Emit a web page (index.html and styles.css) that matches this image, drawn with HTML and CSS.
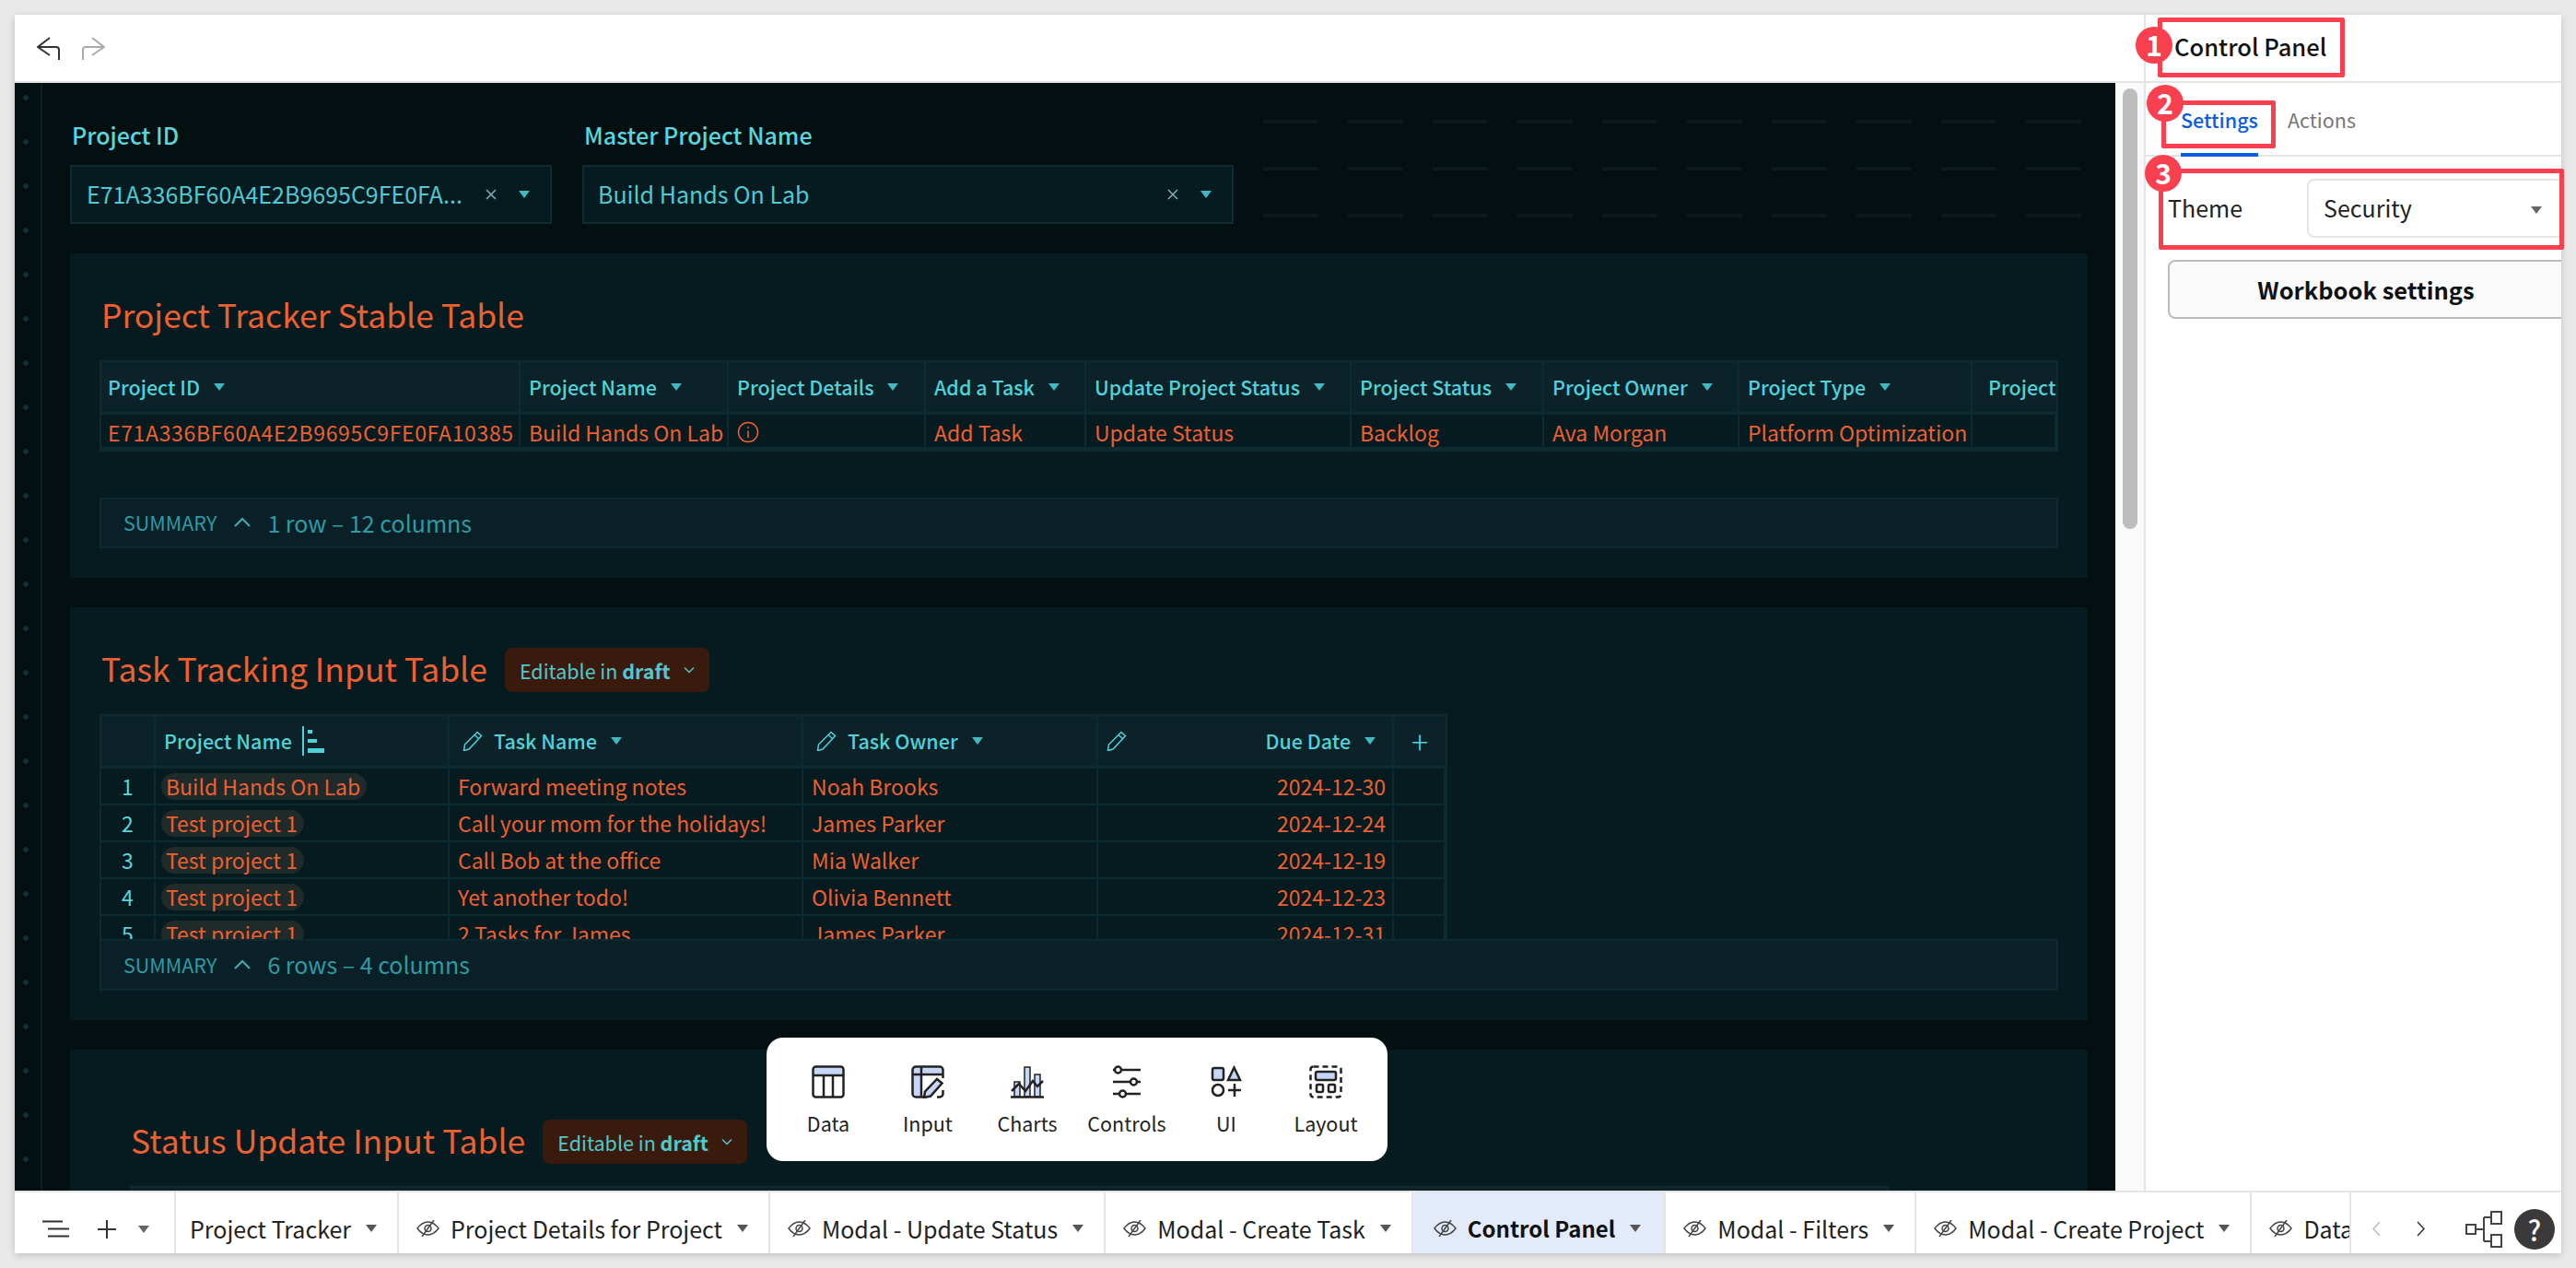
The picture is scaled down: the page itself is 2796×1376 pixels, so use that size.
FILE: index.html
```html
<!DOCTYPE html>
<html lang="en">
<head>
    <meta charset="UTF-8">
    <title>Control Panel</title>
    <link rel="stylesheet" href="styles.css">
</head>
<body>
<div class="app">
    <div class="topbar">
        <div class="history">
            <svg class="hist-icon" viewBox="0 0 26 26"><path d="M14 2 1 12l13 9M1 12h20a3 3 0 0 1 3 3v11"/></svg>
            <svg class="hist-icon redo" viewBox="0 0 26 26"><path d="M12 2l13 10-13 9M25 12H5a3 3 0 0 0-3 3v11"/></svg>
        </div>
        <div class="side-title"><span>Control Panel</span></div>
    </div>

    <div class="main">
        <div class="canvas">
            <div class="strip"></div>
            <div class="sheet">
                <div class="controls">
                    <div class="control first">
                        <label>Project ID</label>
                        <div class="input"><span class="input-text">E71A336BF60A4E2B9695C9FE0FA...</span><svg class="clear" viewBox="0 0 12 12"><path d="M1 1l10 10M11 1 1 11"/></svg><i class="caret"></i></div>
                    </div>
                    <div class="control second">
                        <label>Master Project Name</label>
                        <div class="input"><span class="input-text">Build Hands On Lab</span><svg class="clear" viewBox="0 0 12 12"><path d="M1 1l10 10M11 1 1 11"/></svg><i class="caret"></i></div>
                    </div>
                    <div class="dashes"><div></div><div></div><div></div></div>
                </div>

                <div class="panel">
                    <h2 class="panel-title">Project Tracker Stable Table</h2>
                    <div class="table t1">
                        <div class="th">Project ID <i class="caret"></i></div>
                        <div class="th">Project Name <i class="caret"></i></div>
                        <div class="th">Project Details <i class="caret"></i></div>
                        <div class="th">Add a Task <i class="caret"></i></div>
                        <div class="th">Update Project Status <i class="caret"></i></div>
                        <div class="th">Project Status <i class="caret"></i></div>
                        <div class="th">Project Owner <i class="caret"></i></div>
                        <div class="th">Project Type <i class="caret"></i></div>
                        <div class="th last">Project</div>
                        <div class="td hash">E71A336BF60A4E2B9695C9FE0FA10385</div>
                        <div class="td">Build Hands On Lab</div>
                        <div class="td"><svg class="info" viewBox="0 0 24 24"><circle cx="12" cy="12" r="10.500"/><path d="M12 10.500V18M12 6v2"/></svg></div>
                        <div class="td">Add Task</div>
                        <div class="td">Update Status</div>
                        <div class="td">Backlog</div>
                        <div class="td">Ava Morgan</div>
                        <div class="td">Platform Optimization</div>
                        <div class="td"></div>
                    </div>
                    <div class="summary"><span class="sum-label">SUMMARY</span><svg class="sum-caret" viewBox="0 0 18 11"><path d="M1 10l8-8 8 8"/></svg><span>1 row – 12 columns</span></div>
                </div>

                <div class="panel p2">
                    <div class="title-row">
                        <h2 class="panel-title">Task Tracking Input Table</h2>
                        <div class="badge">Editable in <b>draft</b><svg viewBox="0 0 12 8"><path d="M1 1.500l5 5 5-5"/></svg></div>
                    </div>
                    <div class="table-clip">
                        <div class="table t2">
                            <div class="th"></div>
                            <div class="th">Project Name<svg class="sort" viewBox="0 0 24 32"><path class="sort-line" d="M1 0v32"/><path class="sort-bar" d="M6 4h5v4H6zM6 14h10v4H6zM6 24h18v5H6z"/></svg></div>
                            <div class="th"><svg class="pencil" viewBox="0 0 22 22"><path d="M16 1.500l4.500 4L7 20l-5.500 1.500L2.500 15zM13 4.500l4.500 4"/></svg>Task Name <i class="caret"></i></div>
                            <div class="th"><svg class="pencil" viewBox="0 0 22 22"><path d="M16 1.500l4.500 4L7 20l-5.500 1.500L2.500 15zM13 4.500l4.500 4"/></svg>Task Owner <i class="caret"></i></div>
                            <div class="th right"><svg class="pencil solo" viewBox="0 0 22 22"><path d="M16 1.500l4.500 4L7 20l-5.500 1.500L2.500 15zM13 4.500l4.500 4"/></svg>Due Date <i class="caret"></i></div>
                            <div class="th plus">+</div>

                            <div class="td num">1</div>
                            <div class="td name"><span class="pill">Build Hands On Lab</span></div>
                            <div class="td">Forward meeting notes</div>
                            <div class="td">Noah Brooks</div>
                            <div class="td date">2024-12-30</div>
                            <div class="td"></div>

                            <div class="td num">2</div>
                            <div class="td name"><span class="pill">Test project 1</span></div>
                            <div class="td">Call your mom for the holidays!</div>
                            <div class="td">James Parker</div>
                            <div class="td date">2024-12-24</div>
                            <div class="td"></div>

                            <div class="td num">3</div>
                            <div class="td name"><span class="pill">Test project 1</span></div>
                            <div class="td">Call Bob at the office</div>
                            <div class="td">Mia Walker</div>
                            <div class="td date">2024-12-19</div>
                            <div class="td"></div>

                            <div class="td num">4</div>
                            <div class="td name"><span class="pill">Test project 1</span></div>
                            <div class="td">Yet another todo!</div>
                            <div class="td">Olivia Bennett</div>
                            <div class="td date">2024-12-23</div>
                            <div class="td"></div>

                            <div class="td num">5</div>
                            <div class="td name"><span class="pill">Test project 1</span></div>
                            <div class="td">2 Tasks for James</div>
                            <div class="td">James Parker</div>
                            <div class="td date">2024-12-31</div>
                            <div class="td"></div>
                        </div>
                    </div>
                    <div class="summary tight"><span class="sum-label">SUMMARY</span><svg class="sum-caret" viewBox="0 0 18 11"><path d="M1 10l8-8 8 8"/></svg><span>6 rows – 4 columns</span></div>
                </div>

                <div class="panel p3">
                    <div class="title-row">
                        <h2 class="panel-title">Status Update Input Table</h2>
                        <div class="badge">Editable in <b>draft</b><svg viewBox="0 0 12 8"><path d="M1 1.500l5 5 5-5"/></svg></div>
                    </div>
                    <div class="table-top"></div>
                </div>
            </div>

            <div class="toolbar">
                <div class="tool">
                    <svg viewBox="0 0 36 36"><rect class="fill" x="2" y="2" width="32" height="9"/><rect x="1.500" y="1.500" width="33" height="33" rx="3"/><path d="M2 11h32M13 11v23M23 11v23"/></svg>
                    <span>Data</span>
                </div>
                <div class="tool">
                    <svg viewBox="0 0 36 36"><path class="fill" d="M2 2h32v8H11v24H2z"/><path d="M13 34.500H5A3.500 3.500 0 0 1 1.500 31V5A3.500 3.500 0 0 1 5 1.500h26A3.500 3.500 0 0 1 34.500 5v9M2 10h32M11 2v32M34.500 27v4a3.500 3.500 0 0 1-3.500 3.500h-3"/><path class="fill-line" d="M28 15l5.500 4.500L21 33.500l-7 1.500 1-6.500z"/></svg>
                    <span>Input</span>
                </div>
                <div class="tool">
                    <svg viewBox="0 0 36 36"><path class="fill-thin" d="M4 18h6v16H4zM15 2h6v32h-6zM26 10h6v24h-6z"/><path d="M0 34.500h36"/><path d="M1 28l8-8 7 8 8-11 5 6 6-6"/></svg>
                    <span>Charts</span>
                </div>
                <div class="tool">
                    <svg viewBox="0 0 36 36"><path d="M3 5h2M12 5h21M3 18h19M29 18h4M3 31h7M17 31h16"/><circle cx="8.500" cy="5" r="3.500"/><circle cx="25.500" cy="18" r="3.500"/><circle cx="13.500" cy="31" r="3.500"/></svg>
                    <span>Controls</span>
                </div>
                <div class="tool">
                    <svg viewBox="0 0 36 36"><rect class="fill-line" x="3" y="3" width="12" height="13" rx="2"/><path class="fill-line" d="M26.500 2.500 33 16H20z"/><circle cx="9" cy="27" r="6"/><path d="M20 27h14M27 20v14"/></svg>
                    <span>UI</span>
                </div>
                <div class="tool">
                    <svg viewBox="0 0 36 36"><rect class="dash" x="1.500" y="1.500" width="33" height="33" rx="3"/><rect class="fill-line" x="7" y="7" width="22" height="9" rx="2"/><rect x="8" y="21" width="7" height="8" rx="1.500"/><rect x="21" y="21" width="7" height="8" rx="1.500"/></svg>
                    <span>Layout</span>
                </div>
            </div>
        </div>

        <div class="gutter"><div class="thumb"></div></div>

        <div class="side">
            <div class="tabs-row">
                <div class="side-tab active">Settings</div>
                <div class="side-tab">Actions</div>
            </div>
            <div class="theme-row">
                <span class="theme-label">Theme</span>
                <div class="select">Security<i class="caret grey"></i></div>
            </div>
            <div class="wb-button">Workbook settings</div>
        </div>
    </div>

    <div class="bottombar">
        <div class="page-tools">
            <svg class="menu" viewBox="0 0 29 19"><path d="M0 1.500h22M6 9.500h23M6 17.500h23"/></svg>
            <svg class="add" viewBox="0 0 20 20"><path d="M10 0v20M0 10h20"/></svg>
            <i class="caret grey"></i>
        </div>
        <div class="pages">
            <div class="page plain">Project Tracker<i class="caret dark"></i></div>
            <div class="page"><svg class="eye" viewBox="0 0 25 18"><path d="M1 9c3-4 7-7 11.500-7S21 5 24 9c-3 4-7 7-11.500 7S4 13 1 9zM19 0 6 18"/><circle cx="12.500" cy="9" r="3.500"/></svg>Project Details for Project<i class="caret dark"></i></div>
            <div class="page"><svg class="eye" viewBox="0 0 25 18"><path d="M1 9c3-4 7-7 11.500-7S21 5 24 9c-3 4-7 7-11.500 7S4 13 1 9zM19 0 6 18"/><circle cx="12.500" cy="9" r="3.500"/></svg>Modal - Update Status<i class="caret dark"></i></div>
            <div class="page"><svg class="eye" viewBox="0 0 25 18"><path d="M1 9c3-4 7-7 11.500-7S21 5 24 9c-3 4-7 7-11.500 7S4 13 1 9zM19 0 6 18"/><circle cx="12.500" cy="9" r="3.500"/></svg>Modal - Create Task<i class="caret dark"></i></div>
            <div class="page current"><svg class="eye" viewBox="0 0 25 18"><path d="M1 9c3-4 7-7 11.500-7S21 5 24 9c-3 4-7 7-11.500 7S4 13 1 9zM19 0 6 18"/><circle cx="12.500" cy="9" r="3.500"/></svg>Control Panel<i class="caret dark"></i></div>
            <div class="page"><svg class="eye" viewBox="0 0 25 18"><path d="M1 9c3-4 7-7 11.500-7S21 5 24 9c-3 4-7 7-11.500 7S4 13 1 9zM19 0 6 18"/><circle cx="12.500" cy="9" r="3.500"/></svg>Modal - Filters<i class="caret dark"></i></div>
            <div class="page"><svg class="eye" viewBox="0 0 25 18"><path d="M1 9c3-4 7-7 11.500-7S21 5 24 9c-3 4-7 7-11.500 7S4 13 1 9zM19 0 6 18"/><circle cx="12.500" cy="9" r="3.500"/></svg>Modal - Create Project<i class="caret dark"></i></div>
            <div class="page"><svg class="eye" viewBox="0 0 25 18"><path d="M1 9c3-4 7-7 11.500-7S21 5 24 9c-3 4-7 7-11.500 7S4 13 1 9zM19 0 6 18"/><circle cx="12.500" cy="9" r="3.500"/></svg>Data</div>
        </div>
        <div class="nav-tools">
            <svg class="chev off" viewBox="0 0 10 17"><path d="M9 1 2 8.500 9 16"/></svg>
            <svg class="chev" viewBox="0 0 10 17"><path d="M1 1l7 7.500L1 16"/></svg>
            <svg class="tree" viewBox="0 0 40 40"><path d="M11 20h9M20 7v26M20 7h8M20 33h8"/><rect x="1" y="15" width="10" height="10"/><rect x="28" y="1" width="11" height="13"/><rect x="28" y="26" width="11" height="13"/></svg>
            <div class="help">?</div>
        </div>
    </div>
</div>

<div class="note n1"></div>
<div class="note n2"></div>
<div class="note n3"></div>
<div class="dot d1">1</div>
<div class="dot d2">2</div>
<div class="dot d3">3</div>
</body>
</html>
```
FILE: styles.css
```css
* {
    margin: 0;
    padding: 0;
    box-sizing: border-box;
    font-family: "Noto Sans CJK SC", "Noto Sans", sans-serif;
}

body {
    width: 2796px;
    height: 1376px;
    overflow: hidden;
    background-color: #e9e9e9;
    padding: 16px;
    position: relative;
}

.app {
    width: 2764px;
    height: 1344px;
    background-color: white;
    display: flex;
    flex-direction: column;
    box-shadow: 0 2px 8px rgba(0, 0, 0, .18);
}

.caret {
    display: inline-block;
    width: 0;
    height: 0;
    border-left: 6.500px solid transparent;
    border-right: 6.500px solid transparent;
    border-top: 8px solid #3fb9c2;
}

.caret.grey { border-top-color: #666; }
.caret.dark { border-top-color: #555; margin-left: 16px; }

/* top bar */
.topbar {
    height: 74px;
    flex: none;
    display: flex;
    border-bottom: 2px solid #e4e4e4;
}

.history {
    flex: 1;
    display: flex;
    align-items: center;
    gap: 22px;
    padding-left: 24px;
}

.hist-icon {
    width: 26px;
    height: 26px;
    fill: none;
    stroke: #333;
    stroke-width: 2;
}

.hist-icon.redo { stroke: #aaa; }

.side-title {
    width: 453px;
    border-left: 2px solid #e4e4e4;
    padding: 0 0 5px 31px;
    display: flex;
    align-items: center;
    font-size: 25.500px;
    font-weight: 500;
    color: #111;
}

/* main area */
.main {
    flex: 1;
    display: flex;
    min-height: 0;
}

.canvas {
    width: 2280px;
    flex: none;
    background-color: #040f11;
    display: flex;
    overflow: hidden;
    position: relative;
}

.strip {
    width: 30px;
    flex: none;
    border-right: 2px solid #0a2025;
    background-image: radial-gradient(circle at 12px 16px, #103038 2.500px, transparent 3px);
    background-size: 30px 48px;
}

.sheet {
    width: 2190px;
    margin-left: 30px;
    flex: none;
}

.controls {
    display: flex;
    padding-top: 41px;
    height: 185px;
}

.control label {
    display: block;
    height: 30px;
    line-height: 30px;
    font-size: 25px;
    font-weight: 500;
    color: #5ad6de;
    padding-left: 2px;
}

.control.first { width: 523px; }
.control.second { width: 707px; margin-left: 33px; }
.control.second .input { padding-left: 15px; }

.input {
    margin-top: 18px;
    height: 64px;
    background-color: #061b20;
    border: 2px solid #0f2b31;
    display: flex;
    align-items: center;
    padding: 0 22px 0 16px;
    color: #4fc9d2;
    font-size: 25px;
    line-height: 30px;
}

.input-text {
    flex: 1;
    white-space: nowrap;
    padding-bottom: 2px;
}

.clear {
    width: 12px;
    height: 12px;
    margin-right: 24px;
    fill: none;
    stroke: #7ab4ba;
    stroke-width: 1.500;
}

.dashes {
    flex: 1;
    margin-left: 32px;
    margin-top: -1px;
}

.dashes div {
    height: 4px;
    margin-bottom: 47px;
    background-image: repeating-linear-gradient(90deg, #0a1a1d 0 60px, transparent 60px 92px);
}

/* panels */
.panel {
    background-color: #051b20;
    padding: 38px 32px 32px;
    margin-bottom: 32px;
    height: 352px;
    flex: none;
}

.panel-title {
    font-size: 35.500px;
    line-height: 56px;
    height: 60px;
    font-weight: 400;
    color: #ee6030;
    padding-left: 2px;
}

.panel.p2 {
    height: 448px;
    padding-top: 44px;
}

.panel.p3 {
    height: 300px;
    padding-top: 76px;
}

.title-row {
    display: flex;
    align-items: center;
    height: 48px;
}

.title-row .panel-title {
    padding-left: 2px;
    margin-right: 19px;
}

.badge {
    height: 48px;
    background-color: #3a1a0c;
    border-radius: 8px;
    padding: 0 16px;
    display: flex;
    align-items: center;
    color: #50c8cf;
    font-size: 21.500px;
    white-space: pre;
}

.badge b { font-weight: 700; }

.badge svg {
    width: 12px;
    height: 8px;
    margin-left: 14px;
    fill: none;
    stroke: #50c8cf;
    stroke-width: 1.500;
}

.p3 .title-row { padding-left: 32px; }

.table {
    display: grid;
    border: 2px solid #0d2a30;
    border-bottom-width: 3px;
    margin-top: 18px;
    overflow: hidden;
}

.t1 {
    grid-template-columns: 455px 226px 214px 174px 288px 209px 212px 253px 91px;
    grid-template-rows: 57px 37px;
}

.th {
    background-color: #0a2228;
    color: #4fd2da;
    font-size: 21.500px;
    font-weight: 500;
    line-height: 30px;
    padding-left: 9px;
    display: flex;
    align-items: center;
    white-space: pre;
    border-right: 2px solid #0d2a30;
    border-bottom: 3px solid #0d2a30;
    overflow: hidden;
}

.th:first-child { padding-left: 7px; }
.th .caret { margin-left: 10px; }
.th.last { border-right: none; padding-left: 17px; }

.td {
    color: #ee6030;
    font-size: 23px;
    line-height: 30px;
    padding-left: 9px;
    display: flex;
    align-items: center;
    white-space: nowrap;
    border-right: 2px solid #0d2a30;
    border-bottom: 2px solid #0d2a30;
    overflow: hidden;
}

.t1 .td { padding-top: 2px; }
.td.hash { letter-spacing: .65px; padding-left: 7px; }

.info {
    width: 24px;
    height: 24px;
    fill: none;
    stroke: #ee6030;
    stroke-width: 1.500;
}

.summary {
    margin-top: 50px;
    height: 55px;
    background-color: #0a2027;
    border: 2px solid #0d2a30;
    display: flex;
    align-items: center;
    padding: 0 0 2px 24px;
    color: #2f9aa3;
    font-size: 25px;
}

.summary.tight {
    margin-top: 0;
    height: 56px;
}

.sum-label { font-size: 21.500px; }

.sum-caret {
    width: 18px;
    height: 11px;
    margin: 0 18px 0 19px;
    fill: none;
    stroke: #4aa9b1;
    stroke-width: 2;
}

.table-clip {
    margin-top: 24px;
    height: 244px;
    overflow: hidden;
}

.t2 {
    margin-top: 0;
    width: 1463px;
    grid-template-columns: 59px 319px 384px 320px 321px 56px;
    grid-template-rows: 57px repeat(5, 40px);
}

.t2 .th { padding-left: 9px; }
.t2 .th:nth-child(3), .t2 .th:nth-child(4) { padding-left: 14px; }
.t2 .th .sort { margin-left: 11px; }

.t2 .th.right {
    justify-content: flex-end;
    padding-right: 18px;
}

.t2 .th.plus {
    font-size: 34px;
    font-weight: 300;
    justify-content: center;
    padding-left: 0;
    border-right: none;
}

.sort {
    width: 24px;
    height: 32px;
}

.sort-line { fill: none; stroke: #4fd2da; stroke-width: 2; }
.sort-bar { fill: #4fd2da; }

.pencil {
    width: 22px;
    height: 22px;
    margin-right: 12px;
    fill: none;
    stroke: #4fd2da;
    stroke-width: 1.500;
}

.pencil.solo { margin-right: auto; }

.td.num {
    color: #5ad6de;
    justify-content: center;
    padding-left: 0;
}

.td.name { padding-left: 6px; }

.pill {
    height: 29px;
    line-height: 28px;
    padding: 0 7px 0 5px;
    border-radius: 15px;
    background-color: #1f2a2a;
}

.td.date {
    justify-content: flex-end;
    padding-right: 7px;
}

.table-top {
    margin-top: 24px;
    margin-left: 33px;
    width: 1909px;
    height: 80px;
    background-color: #0a2228;
    border: 2px solid #0d2a30;
}

/* floating toolbar */
.toolbar {
    position: absolute;
    left: 816px;
    bottom: 32px;
    width: 674px;
    height: 134px;
    background-color: white;
    border-radius: 18px;
    display: grid;
    grid-template-columns: repeat(6, 108px);
    padding: 30px 13px 0;
}

.tool {
    display: flex;
    flex-direction: column;
    align-items: center;
}

.tool svg {
    height: 36px;
    width: 36px;
    fill: none;
    stroke: #222;
    stroke-width: 2.500;
}

.tool .fill { fill: #c6d6f6; stroke: none; }
.tool .fill-line { fill: #c6d6f6; }
.tool .fill-thin { fill: #c6d6f6; stroke-width: 1.500; }
.tool .dash { stroke-dasharray: 6 4; }

.tool span {
    margin-top: 12px;
    line-height: 30px;
    font-size: 21.500px;
    color: #222;
}

/* gutter + side panel */
.gutter {
    width: 31px;
    flex: none;
    background-color: #fafafa;
    padding: 6px 8px 0;
}

.thumb {
    height: 478px;
    width: 16px;
    border-radius: 8px;
    background-color: #bdbdbd;
}

.side {
    flex: 1;
    border-left: 2px solid #e4e4e4;
    overflow: hidden;
}

.tabs-row {
    height: 80px;
    border-bottom: 2px solid #e4e4e4;
    display: flex;
    gap: 32px;
    padding-left: 38px;
}

.side-tab {
    line-height: 30px;
    padding-top: 25px;
    height: 80px;
    font-size: 21.500px;
    color: #777;
}

.side-tab.active {
    color: #0b5ce5;
    font-weight: 500;
    border-bottom: 4px solid #0b5ce5;
}

.theme-row {
    display: flex;
    align-items: center;
    height: 64px;
    margin-top: 24px;
    padding-left: 24px;
}

.theme-label {
    width: 151px;
    flex: none;
    font-size: 25px;
    color: #222;
    padding-bottom: 2px;
}

.select {
    width: 320px;
    flex: none;
    height: 64px;
    border: 2px solid #e4e4e4;
    border-radius: 8px;
    display: flex;
    align-items: center;
    padding: 0 0 2px 16px;
    font-size: 25px;
    color: #222;
    position: relative;
}

.select .caret {
    position: absolute;
    left: 241px;
    top: 28px;
}

.wb-button {
    margin: 24px 0 0 24px;
    width: 440px;
    height: 64px;
    border: 2px solid #bbb;
    border-radius: 8px;
    background-color: #fafafa;
    font-size: 25.500px;
    font-weight: 600;
    line-height: 60px;
    padding-right: 10px;
    text-align: center;
    color: #111;
}

/* page tabs */
.bottombar {
    height: 68px;
    flex: none;
    display: flex;
    border-top: 2px solid #e4e4e4;
}

.page-tools {
    width: 173px;
    flex: none;
    display: flex;
    align-items: center;
    padding: 13px 0 0 30px;
}

.menu {
    width: 29px;
    height: 19px;
    fill: none;
    stroke: #333;
    stroke-width: 2;
}

.add {
    width: 20px;
    height: 20px;
    margin-left: 31px;
    fill: none;
    stroke: #333;
    stroke-width: 2;
}

.page-tools .caret { margin-left: 24px; }

.pages {
    width: 2361px;
    flex: none;
    display: flex;
    overflow: hidden;
}

.page {
    flex: none;
    display: flex;
    align-items: center;
    border-left: 2px solid #e4e4e4;
    padding: 11px 22px 0 19px;
    font-size: 25px;
    color: #222;
    white-space: nowrap;
}

.page.plain { padding-left: 15px; }

.page.current {
    background-color: #e3eafa;
    font-size: 24px;
    font-weight: 600;
    color: #111;
    padding-left: 22px;
    padding-right: 25px;
}

.eye {
    width: 25px;
    height: 18px;
    margin-right: 12px;
    fill: none;
    stroke: #444;
    stroke-width: 1.500;
}

.nav-tools {
    flex: 1;
    border-left: 2px solid #e4e4e4;
    display: flex;
    align-items: center;
    padding: 13px 0 0 22px;
}

.chev {
    width: 10px;
    height: 17px;
    margin-right: 39px;
    fill: none;
    stroke: #333;
    stroke-width: 1.500;
}

.chev.off { stroke: #bbb; }

.tree {
    width: 40px;
    height: 40px;
    margin-left: 4px;
    fill: none;
    stroke: #444;
    stroke-width: 2;
}

.help {
    width: 44px;
    height: 44px;
    margin-left: 13px;
    border-radius: 50%;
    background-color: #3a3a3a;
    color: white;
    font-size: 30px;
    font-weight: 500;
    line-height: 44px;
    text-align: center;
}

/* tutorial annotations on top of the screenshot */
.note {
    position: absolute;
    border: 5px solid #f8404e;
    border-radius: 2px;
}

.n1 { left: 2342px; top: 19px; width: 203px; height: 65px; }
.n2 { left: 2346px; top: 109px; width: 124px; height: 52px; }
.n3 { left: 2343px; top: 183px; width: 440px; height: 88px; }

.dot {
    position: absolute;
    width: 40px;
    height: 40px;
    border-radius: 50%;
    background-color: #f8404e;
    color: white;
    font-size: 30px;
    font-weight: 700;
    line-height: 38px;
    text-align: center;
}

.d1 { left: 2318px; top: 29px; }
.d2 { left: 2330px; top: 92px; }
.d3 { left: 2328px; top: 168px; }
```
